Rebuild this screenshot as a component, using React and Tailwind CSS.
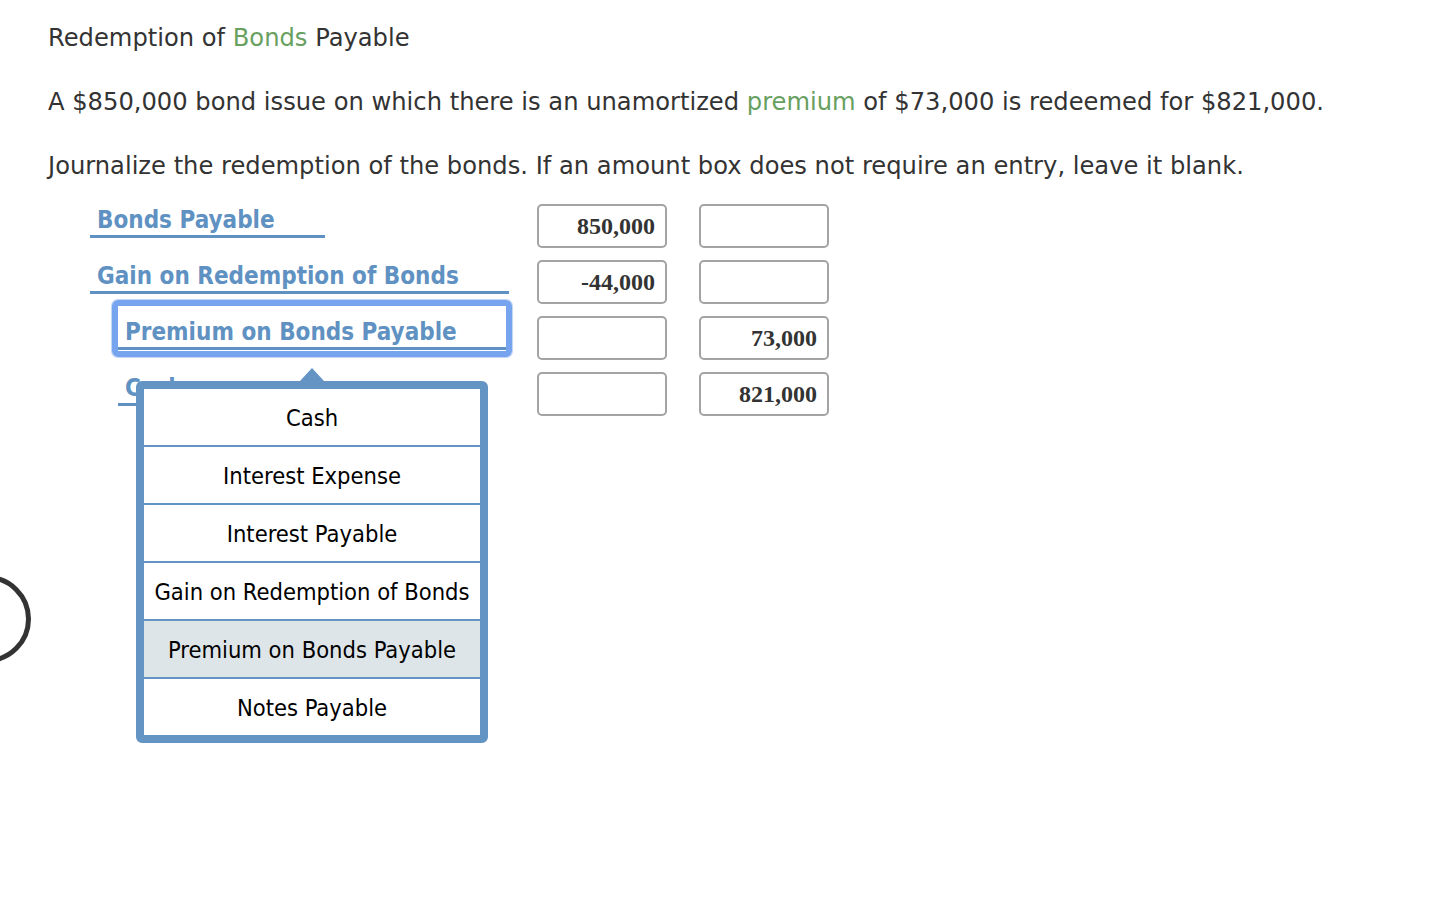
import React from 'react'

const rows = [
  { label: 'Bonds Payable', debit: '850,000', credit: '', indent: false },
  { label: 'Gain on Redemption of Bonds', debit: '-44,000', credit: '', indent: false },
  { label: 'Premium on Bonds Payable', debit: '', credit: '73,000', indent: true, focused: true },
  { label: 'Cash', debit: '', credit: '821,000', indent: true, open: true },
]

const options = [
  'Cash',
  'Interest Expense',
  'Interest Payable',
  'Gain on Redemption of Bonds',
  'Premium on Bonds Payable',
  'Notes Payable',
]

function AccountLabel({ text, full }) {
  return (
    <div
      className={`${full ? 'w-full' : 'w-fit pr-[50px]'} border-b-[3px] border-[#5f91c2] pl-[7px] pt-[2px] font-['DejaVu_Sans_Condensed','DejaVu_Sans',sans-serif] text-[24px] font-bold leading-[30px] text-[#5f91c2]`}
    >
      {text}
    </div>
  )
}

function AmountBox({ value }) {
  return (
    <div className="mt-3 flex h-[44px] w-[130px] items-center justify-end rounded-[5px] border-2 border-[#a3a3a3] bg-white pr-[10px] font-['Liberation_Serif',serif] text-[24px] font-bold text-[#333]">
      {value}
    </div>
  )
}

function AccountMenu() {
  return (
    <div className="absolute left-[46px] top-[8px] z-10 w-[352px]">
      <div className="ml-[164px] h-0 w-0 border-x-[12px] border-b-[13px] border-x-transparent border-b-[#6494c4]" />
      <div className="rounded-[6px] border-8 border-[#6494c4] bg-[#6494c4]">
        <ul className="flex flex-col gap-[2px] font-['DejaVu_Sans_Condensed','DejaVu_Sans',sans-serif] text-[23.5px] text-black">
          {options.map((o) => (
            <li
              key={o}
              className={`flex h-[56px] items-center justify-center pt-[3px] ${o === 'Premium on Bonds Payable' ? 'bg-[#dee5e8]' : 'bg-white'}`}
            >
              {o}
            </li>
          ))}
        </ul>
      </div>
    </div>
  )
}

function JournalRow({ row }) {
  let label = <AccountLabel text={row.label} />
  if (row.focused) {
    label = (
      <div className="-mt-[4px] w-[400px] rounded-[6px] border-[6px] border-[#77a4ee] pb-[1px] pt-[9px] shadow-[0_0_0_1px_#c3d6f7]">
        <AccountLabel text={row.label} full />
      </div>
    )
  }
  return (
    <div className="flex h-[56px] items-start">
      <div className={`relative w-[447px] ${row.indent ? (row.focused ? 'pl-[22px]' : 'pl-[28px]') : ''}`}>
        <div className={row.focused ? '' : 'mt-[11px]'}>{label}</div>
        {row.open && <AccountMenu />}
      </div>
      <div className="flex gap-[32px]">
        <AmountBox value={row.debit} />
        <AmountBox value={row.credit} />
      </div>
    </div>
  )
}

export default function App() {
  return (
    <div className="relative min-h-[910px] overflow-hidden bg-white font-['DejaVu_Sans',Verdana,sans-serif] text-[24.2px] text-[#333]">
      <svg className="absolute left-[-60px] top-[572px]" width="94" height="94" viewBox="0 0 94 94">
        <circle cx="47" cy="47" r="41.5" fill="none" stroke="#333" strokeWidth="5" />
      </svg>

      <div className="px-[48px] pt-[21px]">
        <p className="leading-[34px]">
          Redemption of <span className="text-[#68a060]">Bonds</span> Payable
        </p>
        <p className="mt-[30px] leading-[34px]">
          A $850,000 bond issue on which there is an unamortized{' '}
          <span className="text-[#68a060]">premium</span> of $73,000 is redeemed for $821,000.
        </p>
        <p className="mt-[30px] leading-[34px]">
          Journalize the redemption of the bonds. If an amount box does not require an entry, leave it blank.
        </p>

        <div className="ml-[42px] mt-[9px] flex flex-col">
          {rows.map((r) => (
            <JournalRow key={r.label} row={r} />
          ))}
        </div>
      </div>
    </div>
  )
}
